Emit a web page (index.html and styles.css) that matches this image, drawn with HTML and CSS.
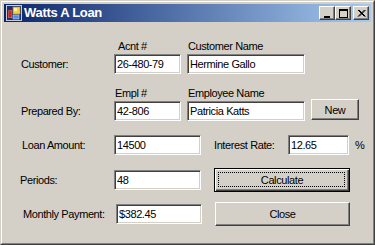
FILE: index.html
```html
<!DOCTYPE html>
<html>
<head>
<meta charset="utf-8">
<title>Watts A Loan</title>
<link rel="stylesheet" href="styles.css">
</head>
<body>
<div class="window">
  <div class="frame">
    <div class="titlebar">
      <svg class="appicon" width="16" height="16" viewBox="0 0 16 16">
        <rect x="0" y="0" width="16" height="16" fill="#c8ccd8"/>
        <rect x="1" y="1" width="14" height="14" fill="#1c3070"/>
        <rect x="2" y="5" width="4" height="8" fill="#f0f0f0"/>
        <rect x="2.5" y="5.5" width="3" height="7" fill="#d82020" stroke="#901010" stroke-width="0.5"/>
        <rect x="7" y="2" width="7" height="7" fill="#f8d030" stroke="#c09000" stroke-width="0.6"/>
        <rect x="8" y="3" width="3" height="3" fill="#fff0a0"/>
        <rect x="7" y="10" width="6" height="4" fill="#5090e8" stroke="#c8d8f0" stroke-width="0.6"/>
      </svg>
      <span class="title">Watts A Loan</span>
      <div class="tbuttons">
        <span class="tbtn"><svg width="10" height="9" viewBox="0 0 10 9"><rect x="1" y="7" width="6" height="2" fill="#000"/></svg></span>
        <span class="tbtn"><svg width="10" height="9" viewBox="0 0 10 9"><rect x="0.5" y="0.5" width="8" height="8" fill="none" stroke="#000"/><rect x="0" y="0" width="9" height="2" fill="#000"/></svg></span>
        <span class="tbtn close"><svg width="10" height="9" viewBox="0 0 10 9"><path d="M1 1 L7.5 7.5 M2 1 L8.5 7.5 M7.5 1 L1 7.5 M8.5 1 L2 7.5" stroke="#000" stroke-width="1" fill="none"/></svg></span>
      </div>
    </div>
    <div class="form">
      <div class="hdr hdr1">
        <span class="h-a">Acnt #</span>
        <span>Customer Name</span>
      </div>
      <div class="row r1">
        <span class="label">Customer:</span>
        <input class="tb w-id" value="26-480-79">
        <input class="tb w-name" value="Hermine Gallo">
      </div>
      <div class="hdr hdr2">
        <span class="h-e">Empl #</span>
        <span>Employee Name</span>
      </div>
      <div class="row r2">
        <span class="label">Prepared By:</span>
        <input class="tb w-id" value="42-806">
        <input class="tb w-name" value="Patricia Katts">
        <button class="btn b-new">New</button>
      </div>
      <div class="row r3">
        <span class="label l-loan">Loan Amount:</span>
        <input class="tb w-num" value="14500">
        <span class="label2">Interest Rate:</span>
        <input class="tb w-rate" value="12.65">
        <span class="pct">%</span>
      </div>
      <div class="row r4">
        <span class="label l-per">Periods:</span>
        <input class="tb w-num" value="48">
        <button class="btn default b-wide">Calculate</button>
      </div>
      <div class="row r5">
        <span class="label l-pay">Monthly Payment:</span>
        <input class="tb w-pay" value="$382.45">
        <button class="btn b-close">Close</button>
      </div>
    </div>
  </div>
</div>
</body>
</html>
```

FILE: styles.css
```css
html, body {
  margin: 0;
  padding: 0;
  background: #d4d0c8;
}

.window {
  width: 375px;
  height: 245px;
  box-sizing: border-box;
  border: 1px solid;
  border-color: #d4d0c8 #404040 #404040 #d4d0c8;
  background: #d4d0c8;
  font-family: "Liberation Sans", Arial, sans-serif;
  font-size: 11px;
  letter-spacing: -0.4px;
  color: #000;
}

.frame {
  height: 100%;
  box-sizing: border-box;
  border: 1px solid;
  border-color: #ffffff #808080 #808080 #ffffff;
  padding: 2px;
}

.titlebar {
  height: 18px;
  display: flex;
  align-items: center;
  background: linear-gradient(to right, #0a246a, #a6caf0);
  padding-left: 2px;
}

.appicon {
  flex: none;
  margin-right: 2px;
}

.title {
  color: #fff;
  font-weight: bold;
  font-size: 13px;
  letter-spacing: -0.3px;
  line-height: 18px;
}

.tbuttons {
  margin-left: auto;
  display: flex;
  margin-right: 2px;
}

.tbtn {
  width: 16px;
  height: 14px;
  box-sizing: border-box;
  background: #d4d0c8;
  border: 1px solid;
  border-color: #fff #404040 #404040 #fff;
  box-shadow: inset -1px -1px #808080;
  display: flex;
  align-items: center;
  justify-content: center;
  padding: 1px 0 0 1px;
}

.tbtn.close {
  margin-left: 2px;
}

.form {
  padding-top: 18px;
}

.hdr {
  display: flex;
  height: 13px;
  line-height: 13px;
}

.hdr1 .h-a {
  margin-left: 114px;
  width: 70px;
}

.hdr2 {
  margin-top: 13px;
}

.hdr2 .h-e {
  margin-left: 111px;
  width: 73px;
}

.row {
  display: flex;
  align-items: center;
  height: 20px;
  padding-left: 17px;
}

.r1 { margin-top: 1px; }
.r2 { margin-top: 1px; }
.r3 { margin-top: 14px; }
.r4 { margin-top: 15px; }
.r5 { margin-top: 14px; }

.label {
  width: 93px;
  flex: none;
  line-height: 13px;
}

.l-loan { padding-left: 1px; width: 92px; }
.l-per { margin-left: -1px; width: 94px; }
.l-pay { padding-left: 2px; width: 92px; }

.tb {
  box-sizing: border-box;
  height: 20px;
  margin: 0;
  border: 1px solid;
  border-color: #808080 #ffffff #ffffff #808080;
  box-shadow: inset 1px 1px #404040, inset -1px -1px #d4d0c8;
  background: #fff;
  font-family: "Liberation Sans", Arial, sans-serif;
  font-size: 11px;
  letter-spacing: -0.4px;
  color: #000;
  outline: none;
  flex: none;
  padding: 0 1px 0 2px;
}

.w-id { width: 67px; }
.w-name { width: 118px; margin-left: 6px; }
.w-num { width: 87px; }
.w-pay { width: 86px; margin-left: 1px; }
.w-rate { width: 61px; }

.label2 {
  margin-left: 13px;
  width: 74px;
  flex: none;
}

.pct {
  margin-left: 6px;
}

.btn {
  position: relative;
  box-sizing: border-box;
  margin: 0;
  padding: 0;
  background: #d4d0c8;
  border: 1px solid;
  border-color: #ffffff #404040 #404040 #ffffff;
  box-shadow: inset -1px -1px #808080;
  font-family: "Liberation Sans", Arial, sans-serif;
  font-size: 11px;
  letter-spacing: -0.4px;
  color: #000;
  flex: none;
}

.b-new {
  width: 48px;
  height: 21px;
  margin-left: 6px;
  align-self: flex-start;
  margin-top: -2px;
}

.b-wide {
  width: 136px;
  height: 24px;
  margin-left: 13px;
}

.b-close {
  width: 135px;
  height: 24px;
  margin-left: 13px;
}

.btn.default {
  border-color: #000;
  box-shadow: inset 1px 1px #fff, inset -1px -1px #404040, inset -2px -2px #808080;
}

.btn.default::after {
  content: "";
  position: absolute;
  left: 3px;
  top: 3px;
  right: 4px;
  bottom: 4px;
  border: 1px dotted #000;
}
```
